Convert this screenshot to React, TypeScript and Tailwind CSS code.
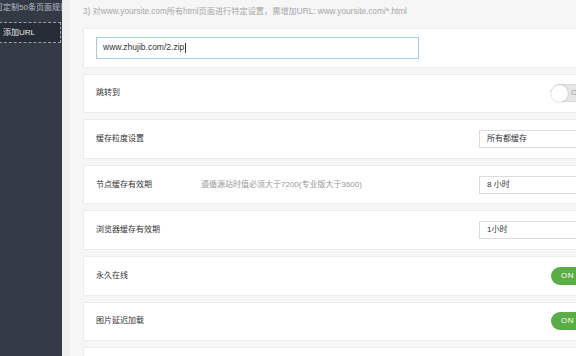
import React from "react";

const font = { fontFamily: '"Liberation Sans", "Noto Sans CJK SC", sans-serif' };

function Card({ children }: { children: React.ReactNode }) {
  return (
    <div className="h-[39.6px] w-[540px] shrink-0 bg-white border border-[#ececec] flex items-center pl-[12px] relative">
      {children}
    </div>
  );
}

function Select({ text }: { text: string }) {
  return (
    <div className="absolute left-[395px] top-1/2 -translate-y-1/2 h-[18px] w-[120px] border border-[#dcdcdc] bg-white flex items-center pl-[7px] text-[8px] text-[#333]">
      {text}
    </div>
  );
}

function Toggle({ on }: { on: boolean }) {
  if (on) {
    return (
      <div className="absolute left-[467px] top-1/2 -translate-y-1/2 h-[18px] w-[46px] rounded-full bg-[#5aac44] flex items-center pl-[10px] text-[8px] text-white tracking-[0.5px]">
        ON
      </div>
    );
  }
  return (
    <div className="absolute left-[467px] top-1/2 -translate-y-1/2 h-[18px] w-[46px] rounded-full bg-[#e6e6e6] border border-[#dadada] flex items-center">
      <div className="w-[17px] h-[17px] rounded-full bg-white shadow-[0_0_2px_rgba(0,0,0,0.25)] -ml-[1px]" />
      <span className="ml-[3px] text-[8px] text-[#999]">OFF</span>
    </div>
  );
}

export default function App() {
  return (
    <div className="w-[576px] h-[356px] overflow-hidden flex" style={font}>
      <div className="w-[62px] h-full bg-[#333a46] shrink-0 overflow-hidden">
        <div className="h-[22px] pt-[2px] whitespace-nowrap text-[8px] text-[#b9bdc4] -ml-[5px]">
          可定制50条页面规则
        </div>
        <div className="h-[21px] w-[62px] -ml-[1px] border border-dashed border-[#9aa0a8] bg-[#272d37] flex items-center pl-[3px] text-[8px] text-[#e8e8e8]">
          添加URL
        </div>
      </div>
      <div className="w-[8px] h-full bg-[#eeeeee] shrink-0" />
      <div className="flex-1 h-full bg-[#f6f6f6] overflow-hidden pl-[13px]">
        <div className="h-[28px] flex items-center pb-[4px] text-[8.2px] text-[#a6a6a6] whitespace-nowrap">
          3) 对www.yoursite.com所有html页面进行特定设置，需增加URL: www.yoursite.com/*.html
        </div>
        <div className="flex flex-col gap-[6px]">
          <Card>
            <div className="h-[22px] w-[323px] border border-[#9fcdf0] bg-white flex items-center pl-[6px] text-[8.5px] text-[#333]">
              www.zhujib.com/2.zip<span className="w-px h-[10px] bg-[#333] ml-[1px]" />
            </div>
          </Card>
          <Card>
            <span className="text-[8px] text-[#333]">跳转到</span>
            <Toggle on={false} />
          </Card>
          <Card>
            <span className="text-[8px] text-[#333]">缓存粒度设置</span>
            <Select text="所有都缓存" />
          </Card>
          <Card>
            <span className="text-[8px] text-[#333]">节点缓存有效期</span>
            <span className="absolute left-[117px] text-[8px] text-[#999]">遵循源站时值必须大于7200(专业版大于3600)</span>
            <Select text="8 小时" />
          </Card>
          <Card>
            <span className="text-[8px] text-[#333]">浏览器缓存有效期</span>
            <Select text="1小时" />
          </Card>
          <Card>
            <span className="text-[8px] text-[#333]">永久在线</span>
            <Toggle on={true} />
          </Card>
          <Card>
            <span className="text-[8px] text-[#333]">图片延迟加载</span>
            <Toggle on={true} />
          </Card>
          <Card>
            <span className="text-[8px] text-[#333]">&nbsp;</span>
          </Card>
        </div>
      </div>
    </div>
  );
}
